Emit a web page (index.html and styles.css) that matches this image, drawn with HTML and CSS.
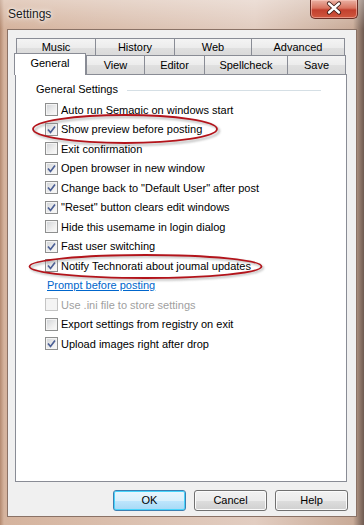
FILE: index.html
```html
<!DOCTYPE html>
<html>
<head>
  <title>Settings</title>
  <link rel="stylesheet" href="styles.css">
</head>
<body>
  <div class="window">
    <div class="titlebar">
      <span class="title">Settings</span>
      <div class="close">
        <svg width="48" height="19" viewBox="0 0 48 19">
          <path d="M19 4.5 L29 13.5 M29 4.5 L19 13.5" stroke="#3b1a14" stroke-width="4.2" stroke-linecap="round"/>
          <path d="M19 4.5 L29 13.5 M29 4.5 L19 13.5" stroke="#ffffff" stroke-width="2.4" stroke-linecap="round"/>
        </svg>
      </div>
    </div>

    <div class="client">
      <div class="tabs">
        <div class="tab-row">
          <div class="tab music">Music</div>
          <div class="tab history">History</div>
          <div class="tab web">Web</div>
          <div class="tab advanced">Advanced</div>
        </div>
        <div class="tab-row lower">
          <div class="tab general selected">General</div>
          <div class="tab view">View</div>
          <div class="tab editor">Editor</div>
          <div class="tab spellcheck">Spellcheck</div>
          <div class="tab save">Save</div>
        </div>

        <div class="panel">
          <div class="group-head">
            <span class="group-label">General Settings</span>
            <div class="group-line"></div>
          </div>
          <ul class="options">
            <li class="option"><span class="box"></span>Auto run Semagic on windows start</li>
            <li class="option"><span class="box"><svg width="11" height="11" viewBox="0 0 11 11"><path d="M2 5.5 L4.5 8.5 L9 2.5" fill="none" stroke="#4b5f95" stroke-width="1.7"/></svg></span>Show preview before posting</li>
            <li class="option"><span class="box"></span>Exit confirmation</li>
            <li class="option"><span class="box"><svg width="11" height="11" viewBox="0 0 11 11"><path d="M2 5.5 L4.5 8.5 L9 2.5" fill="none" stroke="#4b5f95" stroke-width="1.7"/></svg></span>Open browser in new window</li>
            <li class="option"><span class="box"><svg width="11" height="11" viewBox="0 0 11 11"><path d="M2 5.5 L4.5 8.5 L9 2.5" fill="none" stroke="#4b5f95" stroke-width="1.7"/></svg></span>Change back to "Default User" after post</li>
            <li class="option"><span class="box"><svg width="11" height="11" viewBox="0 0 11 11"><path d="M2 5.5 L4.5 8.5 L9 2.5" fill="none" stroke="#4b5f95" stroke-width="1.7"/></svg></span>"Reset" button clears edit windows</li>
            <li class="option"><span class="box"></span>Hide this usemame in login dialog</li>
            <li class="option"><span class="box"><svg width="11" height="11" viewBox="0 0 11 11"><path d="M2 5.5 L4.5 8.5 L9 2.5" fill="none" stroke="#4b5f95" stroke-width="1.7"/></svg></span>Fast user switching</li>
            <li class="option"><span class="box"><svg width="11" height="11" viewBox="0 0 11 11"><path d="M2 5.5 L4.5 8.5 L9 2.5" fill="none" stroke="#4b5f95" stroke-width="1.7"/></svg></span>Notify Technorati about joumal updates</li>
            <li class="option link-row"><a class="link" href="#">Prompt before posting</a></li>
            <li class="option disabled"><span class="box"></span>Use .ini file to store settings</li>
            <li class="option"><span class="box"></span>Export settings from registry on exit</li>
            <li class="option"><span class="box"><svg width="11" height="11" viewBox="0 0 11 11"><path d="M2 5.5 L4.5 8.5 L9 2.5" fill="none" stroke="#4b5f95" stroke-width="1.7"/></svg></span>Upload images right after drop</li>
          </ul>
        </div>
      </div>

      <div class="buttons">
        <button class="btn default">OK</button>
        <button class="btn">Cancel</button>
        <button class="btn">Help</button>
      </div>
    </div>

    <!-- hand drawn highlight marks -->
    <svg class="marks" width="364" height="525" viewBox="0 0 364 525">
      <defs>
        <filter id="shadow" x="-10%" y="-30%" width="120%" height="160%">
          <feGaussianBlur stdDeviation="1.2"/>
        </filter>
      </defs>
      <g fill="none" stroke="#8c8c8c" stroke-width="2" filter="url(#shadow)" opacity="0.6">
        <ellipse cx="127" cy="131" rx="92" ry="14"/>
        <ellipse cx="147" cy="268" rx="116" ry="11.5"/>
      </g>
      <g fill="none" stroke="#b3141b" stroke-width="1.8">
        <ellipse cx="125" cy="129" rx="92" ry="14"/>
        <ellipse cx="145.5" cy="266.5" rx="116" ry="11.5"/>
      </g>
    </svg>
  </div>
</body>
</html>
```

FILE: styles.css
```css
body {
  margin: 0;
  padding: 0;
  font-family: "Liberation Sans", Arial, sans-serif;
  font-size: 11px;
  color: #000;
}
.window {
  position: relative;
  width: 364px;
  height: 525px;
  box-sizing: border-box;
  display: flex;
  flex-direction: column;
  background: linear-gradient(90deg, #b48a70 0, #d5b39d 4px, #dcc2b2 40%, #e2cdc1 70%, #c9ab98 97%, #6e5a50 100%);
}
.titlebar {
  height: 29px;
  display: flex;
  align-items: flex-start;
  justify-content: space-between;
  background: linear-gradient(180deg, rgba(255, 255, 255, 0.35), rgba(255, 255, 255, 0) 29px);
}
.title {
  margin: 7px 0 0 8px;
  font-size: 12px;
  color: #1b1b1b;
  text-shadow: 0 0 6px #fff, 0 0 3px #fff;
}
.close {
  width: 48px;
  height: 19px;
  margin-right: 6px;
  box-sizing: border-box;
  border: 1px solid #6b2d25;
  border-top: none;
  border-radius: 0 0 5px 5px;
  background: linear-gradient(180deg, #eab1a3 0, #d8735f 45%, #c2402e 55%, #d0583f 100%);
  box-shadow: inset 0 0 0 1px rgba(255, 210, 200, 0.5);
}
.close svg {
  display: block;
  margin: -1px 0 0 -1px;
}
.client {
  flex: 1;
  margin: 0 7px 8px 7px;
  border: 1px solid #8a7266;
  background: #f0f0f0;
  display: flex;
  flex-direction: column;
}
.tabs {
  margin: 8px 0 0 7px;
  width: 332px;
  display: flex;
  flex-direction: column;
}
.tab-row {
  display: flex;
  padding-left: 1px;
  height: 17px;
}
.tab-row.lower {
  height: 19px;
  align-items: flex-start;
}
.tab {
  box-sizing: border-box;
  height: 18px;
  border: 1px solid #898c95;
  border-bottom: none;
  background: linear-gradient(180deg, #f4f4f4 0, #ececec 50%, #e0e0e0 51%, #d9d9d9 100%);
  display: flex;
  align-items: center;
  justify-content: center;
  padding-bottom: 1px;
}
.tab + .tab {
  margin-left: -1px;
}
.lower .tab {
  height: 19px;
}
.music { width: 80px; }
.history { width: 80px; }
.web { width: 78px; }
.advanced { width: 94px; }
.general { width: 71px; }
.view { width: 59px; }
.editor { width: 61px; }
.spellcheck { width: 84px; }
.save { width: 59px; }
.lower .tab.selected {
  height: 22px;
  margin: -2px 0 -1px -2px;
  width: 72px;
  background: #fff;
  z-index: 1;
  padding-bottom: 3px;
}
.lower .tab.selected + .tab {
  margin-left: 0;
}
.panel {
  height: 408px;
  box-sizing: border-box;
  border: 1px solid #898c95;
  background: #fff;
  padding: 7px 25px 0 20px;
}
.group-head {
  display: flex;
  align-items: center;
  height: 14px;
}
.group-label {
  margin-right: 9px;
}
.group-line {
  flex: 1;
  height: 1px;
  margin-top: 3px;
  background: #d5dfe5;
}
.options {
  list-style: none;
  margin: 4px 0 0 0;
  padding: 0 0 0 9px;
}
.option {
  height: 19.5px;
  display: flex;
  align-items: center;
}
.box {
  width: 13px;
  height: 13px;
  box-sizing: border-box;
  margin-right: 3px;
  border: 1px solid #8e8f8f;
  background: linear-gradient(135deg, #cfd2d6 0, #eeeeee 60%, #fbfbfb 100%);
  box-shadow: inset 0 0 0 1px #f4f4f4;
}
.box svg {
  display: block;
}
.option.disabled {
  color: #a0a0a0;
}
.disabled .box {
  border-color: #c4c4c4;
  background: #f4f4f4;
}
.link-row {
  padding-left: 2px;
}
.link {
  color: #0066cc;
  text-decoration: underline;
}
.buttons {
  display: flex;
  justify-content: flex-end;
  gap: 8px;
  margin: 8px 8px 0 0;
}
.btn {
  width: 73px;
  height: 21px;
  box-sizing: border-box;
  font-family: "Liberation Sans", Arial, sans-serif;
  font-size: 11px;
  color: #000;
  border: 1px solid #707070;
  border-radius: 3px;
  background: linear-gradient(180deg, #f2f2f2 0, #ebebeb 50%, #dddddd 51%, #cfcfcf 100%);
  box-shadow: inset 0 0 0 1px #fbfbfb;
  padding: 0 0 1px 0;
}
.btn.default {
  border-color: #3c7fb1;
  background: linear-gradient(180deg, #eaf6fd 0, #d9f0fc 50%, #bee6fd 51%, #a7d9f5 100%);
  box-shadow: inset 0 0 0 1px #48d4fb;
}
.marks {
  position: absolute;
  left: 0;
  top: 0;
  pointer-events: none;
}
```
